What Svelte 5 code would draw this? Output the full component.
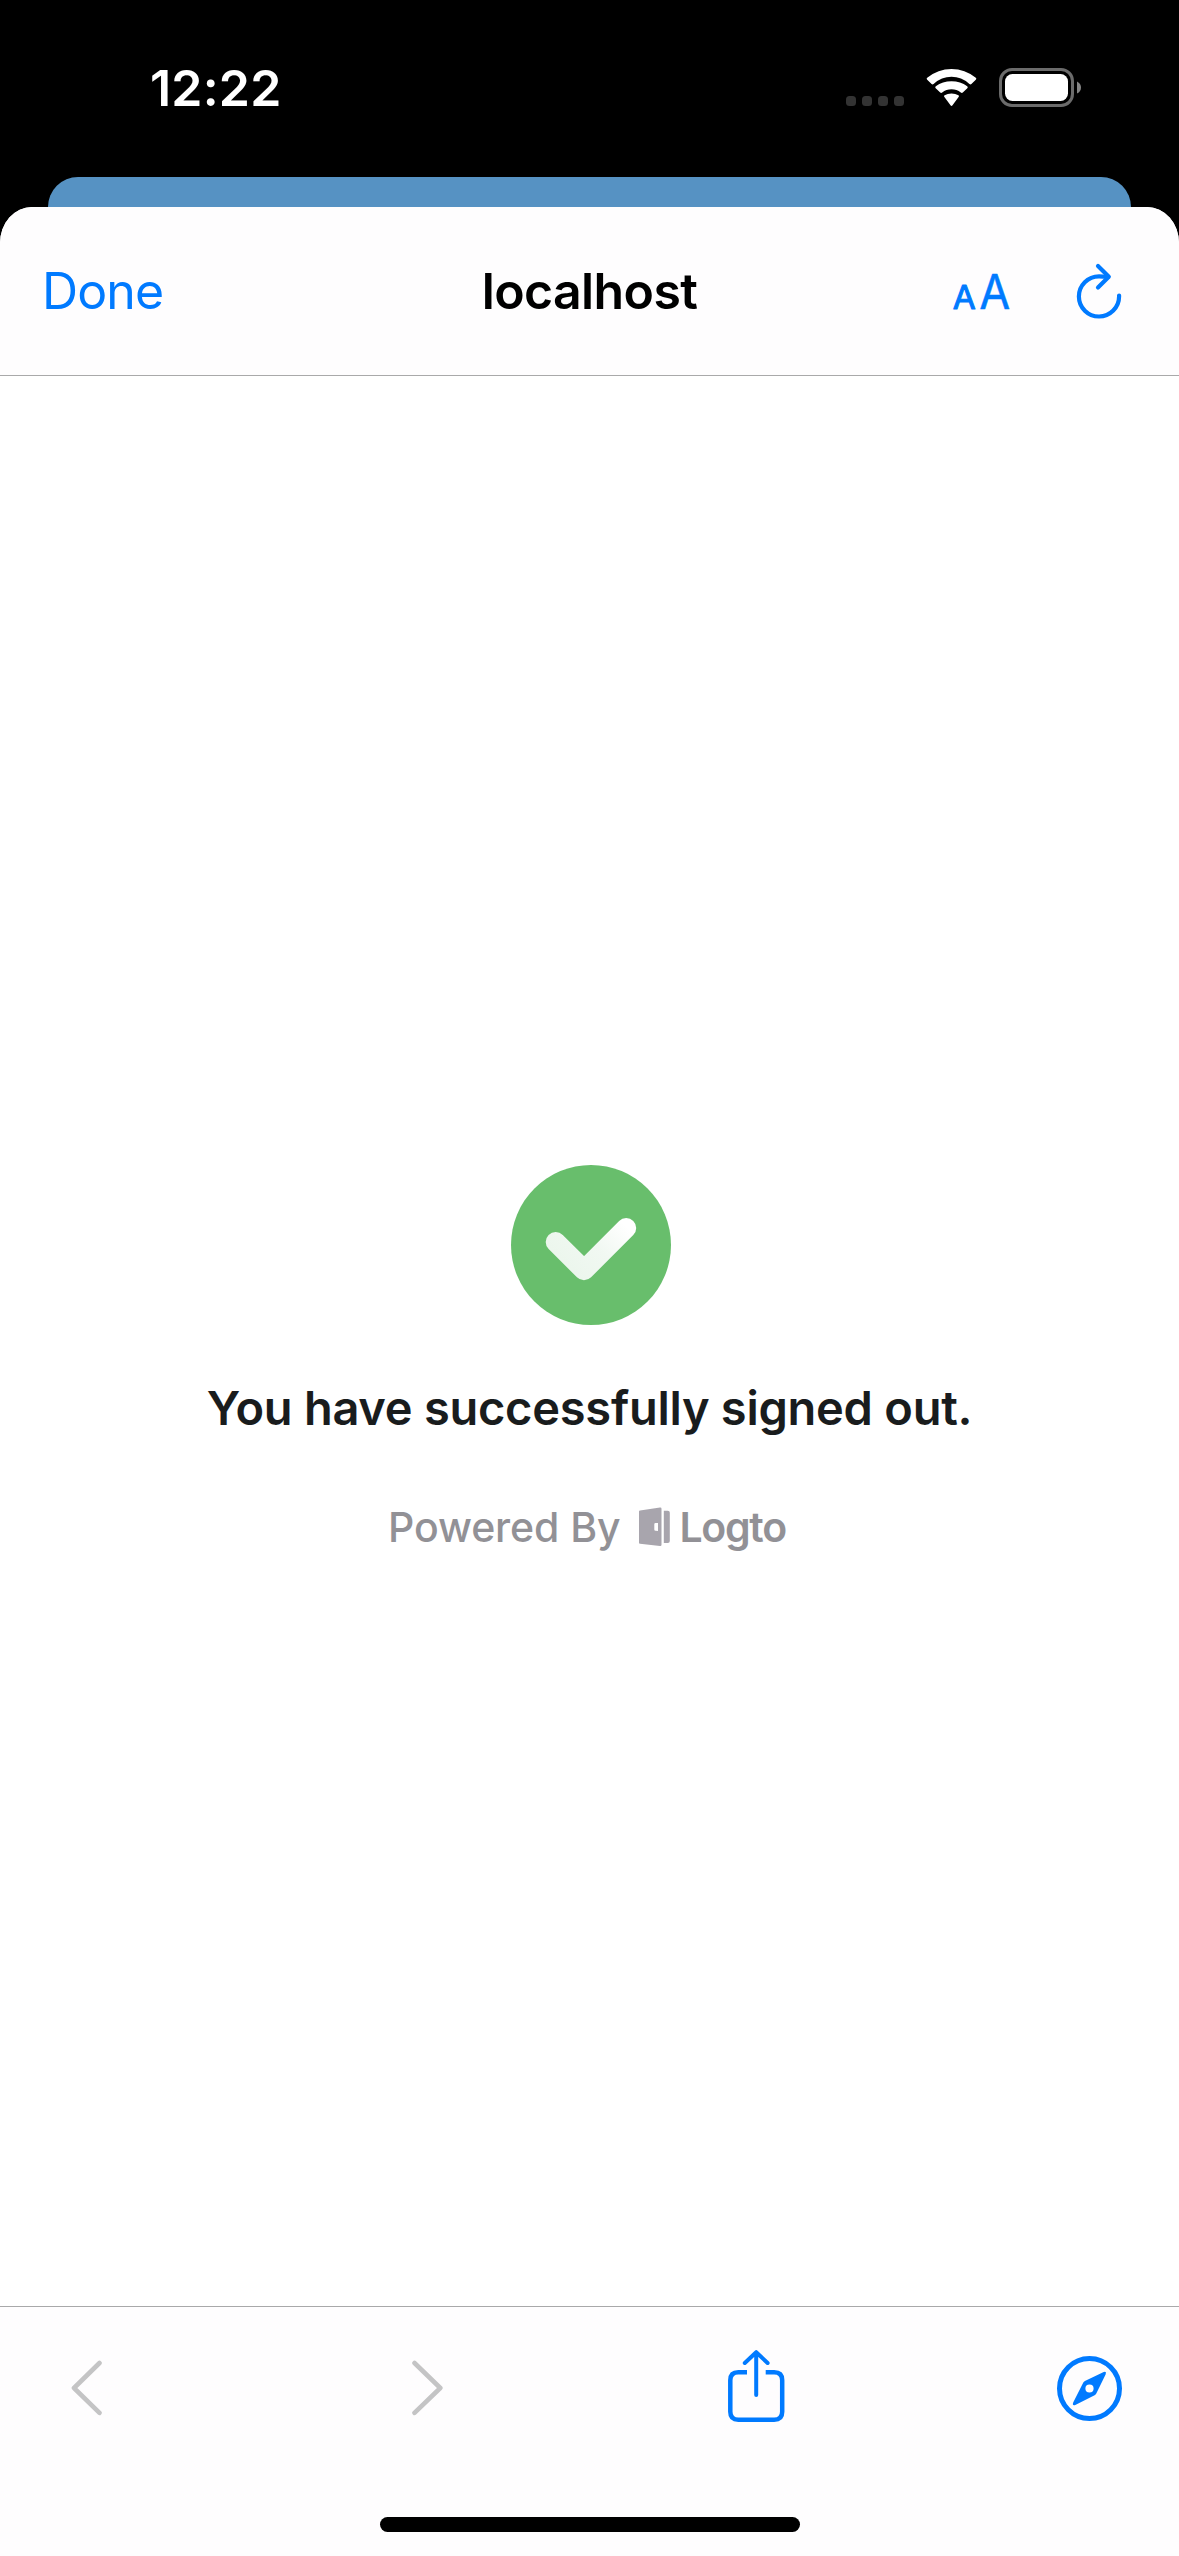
<script>
  const signalDots = [0, 1, 2, 3];
</script>

<div class="screen">
  <div class="status">
    <span class="time">12:22</span>
    <div class="indicators">
      <div class="dots">
        {#each signalDots as dot (dot)}
          <i></i>
        {/each}
      </div>
      <svg class="wifi" viewBox="926 68 51 39" width="51" height="39" fill="#fff">
        <path d="M927.2 79.8Q926 78.800 927.200 77.800Q938 69 951.500 69T975.800 77.800Q977 78.800 975.800 79.800L971.400 84Q970.500 84.800 969.400 83.900Q961.500 76.800 951.500 76.800T933.600 83.900Q932.500 84.800 931.600 84Z" />
        <path d="M935.700 88.200Q934.600 87.200 935.800 86.200Q942.500 81.300 951.500 81.300T967.200 86.200Q968.400 87.200 967.300 88.200L962.800 92.500Q961.900 93.300 960.800 92.500Q956.800 89.300 951.500 89.300T942.200 92.500Q941.100 93.300 940.200 92.500Z" />
        <path d="M944.400 97Q943.400 96 944.600 95.200Q947.500 93.500 951.500 93.500T958.400 95.200Q959.600 96 958.600 97L952.500 105.200Q951.500 106.600 950.500 105.200Z" />
      </svg>
      <svg class="battery" viewBox="999 68 83 39" width="83" height="39">
        <rect x="1000.500" y="69.500" width="72" height="36" rx="11.500" fill="none" stroke="#6b6b6b" stroke-width="3" />
        <rect x="1005" y="74" width="63" height="27" rx="7.500" fill="#fff" />
        <path d="M1077 81.500Q1081 83.500 1081 87.500T1077 93.500Z" fill="#858585" />
      </svg>
    </div>
  </div>
  <div class="backdrop"></div>
  <div class="sheet-wrap">
    <div class="sheet">
      <header>
        <span class="done">Done</span>
        <span class="host">localhost</span>
        <div class="actions">
          <svg class="aa" viewBox="953 270 58 44" width="58" height="44">
            <text x="952.800" y="308.800" font-size="33" textLength="23" lengthAdjust="spacingAndGlyphs">A</text>
            <text x="979.300" y="308.800" font-size="48" textLength="31" lengthAdjust="spacingAndGlyphs" class="big">A</text>
          </svg>
          <svg class="line" viewBox="1075 262 48 58" width="48" height="58" stroke-width="4.200">
            <path d="M1119.100 295.500V296.300A20.100 20.100 0 1 1 1099 276.300Q1103 276.300 1108 277" />
            <path d="M1098 266L1108.800 276.800L1098 287.500" />
          </svg>
        </div>
      </header>

      <main>
        <svg class="success" viewBox="511 1165 160 160" width="160" height="160">
          <defs>
            <linearGradient id="tick" gradientUnits="userSpaceOnUse" x1="560" y1="1285" x2="622" y2="1222">
              <stop offset="0" stop-color="#e9f5ea" />
              <stop offset="0.600" stop-color="#f1f8f2" />
              <stop offset="1" stop-color="#fff" />
            </linearGradient>
          </defs>
          <circle cx="591" cy="1245" r="80" fill="#68be6c" />
          <path d="M555.700 1242L584 1270.200L626.200 1228" fill="none" stroke="url(#tick)" stroke-width="20" stroke-linecap="round" stroke-linejoin="round" />
        </svg>
        <h1>You have successfully signed out.</h1>
        <div class="powered">
          <span class="by">Powered By</span>
          <svg viewBox="638 1507 31 40" width="31" height="40" fill="#a8a5ad">
            <path fill-rule="evenodd" d="M638 1511.500Q638 1510.700 639 1510.500L659 1507.500Q660.500 1507.300 660.500 1508.800V1544.700Q660.500 1546.200 659 1546L639 1543.700Q638 1543.500 638 1542.700ZM654.500 1523Q653.300 1523 653.300 1524.200V1529.500Q653.300 1530.700 654.500 1530.800L657 1531V1523Z" />
            <path d="M662.800 1510.800H666.800Q668.800 1510.800 668.800 1512.800V1541Q668.800 1543 666.800 1543H662.800Z" />
          </svg>
          <span class="brand">Logto</span>
        </div>
      </main>

      <footer>
        <nav>
          <svg class="line off" viewBox="71 2348 31 76" width="31" height="76" stroke-width="4.600">
            <path d="M99.500 2363L74 2388L99.500 2412.800" />
          </svg>
          <svg class="line off forward" viewBox="412 2348 31 76" width="31" height="76" stroke-width="4.600">
            <path d="M414.500 2363L440.300 2388L414.500 2412.800" />
          </svg>
          <svg class="line share" viewBox="728 2348 57 76" width="57" height="76" stroke-width="4.500">
            <path stroke-linecap="butt" d="M747 2372.300H738.300Q730.300 2372.300 730.300 2380.300V2411.700Q730.300 2419.700 738.300 2419.700H774.200Q782.200 2419.700 782.200 2411.700V2380.300Q782.200 2372.300 774.200 2372.300H765.700" />
            <path stroke-width="4" d="M756.200 2353V2395M744.800 2363L756.200 2352.200L767.600 2363" />
          </svg>
          <svg class="line compass" viewBox="1057 2348 65 76" width="65" height="76">
            <circle cx="1089.500" cy="2388.500" r="30" stroke-width="5" />
            <path class="needle" fill-rule="evenodd" d="M1083.300 2382.500Q1083.900 2381.500 1084.900 2381L1103.700 2372Q1106.800 2371 1105.700 2374.200L1096.300 2393.500Q1095.700 2394.700 1094.600 2395.300L1075.300 2405Q1071.900 2406 1073.200 2402.600ZM1085.400 2388.500a4.100 4.100 0 1 0 8.200 0a4.100 4.100 0 1 0 -8.200 0Z" />
          </svg>
        </nav>
        <div class="home"></div>
      </footer>
    </div>
  </div>
</div>

<style>
  :global(body) {
    margin: 0;
    background: #000;
  }
  .screen {
    width: 1179px;
    height: 2556px;
    display: flex;
    flex-direction: column;
    background: #000;
    font-family: Inter, "Liberation Sans", sans-serif;
    overflow: hidden;
  }
  svg {
    display: block;
    flex: none;
  }
  span,
  h1 {
    white-space: nowrap;
  }
  .status {
    height: 177px;
    box-sizing: border-box;
    padding: 58px 97px 0 150px;
    display: flex;
    justify-content: space-between;
    align-items: flex-start;
  }
  .time {
    color: #fff;
    font-size: 50px;
    line-height: 60px;
    font-weight: 600;
    letter-spacing: 0.2px;
  }
  .indicators {
    display: flex;
    padding-top: 10px;
  }
  .dots {
    display: flex;
    gap: 6px;
    padding-top: 28px;
    margin-right: 22px;
  }
  .dots i {
    width: 10px;
    height: 10px;
    border-radius: 3.5px;
    background: #333;
  }
  .wifi {
    margin-right: 22px;
  }
  .backdrop {
    height: 30px;
    margin: 0 48px;
    background: #5692c3;
    border-radius: 30px 30px 0 0 / 30px 30px 0 0;
  }
  .sheet-wrap {
    flex: 1;
    display: flex;
  }
  .sheet {
    flex: 1;
    display: flex;
    flex-direction: column;
    background: #fff;
    border-radius: 32px 32px 0 0 / 36px 36px 0 0;
    overflow: hidden;
  }
  header {
    height: 169px;
    box-sizing: border-box;
    border-bottom: 1px solid #a9a9aa;
    background: #fefdfe;
    display: grid;
    grid-template-columns: 1fr auto 1fr;
    padding: 0 56px;
  }
  .done,
  .host {
    padding-top: 54px;
    font-size: 50px;
    line-height: 60px;
  }
  .done {
    margin-left: -14px;
    color: #007aff;
    letter-spacing: -0.9px;
  }
  .host {
    color: #000;
    font-weight: 600;
    letter-spacing: -0.6px;
  }
  .actions {
    display: flex;
    justify-content: flex-end;
    padding-top: 55px;
  }
  .aa {
    margin: 8px 64px 0 0;
    overflow: visible;
  }
  .aa text {
    fill: #007aff;
    stroke: #007aff;
    stroke-width: 1px;
    stroke-linejoin: round;
  }
  .aa .big {
    stroke-width: 0.5px;
  }
  .line {
    fill: none;
    stroke: #007aff;
    stroke-linecap: round;
    stroke-linejoin: round;
  }
  .off {
    stroke: #c4c4c5;
  }
  main {
    flex: 1;
    display: flex;
    flex-direction: column;
    align-items: center;
    padding-top: 789px;
  }
  .success {
    margin-left: 3px;
  }
  h1 {
    margin: 53px 0 0;
    color: #191c1d;
    font-size: 47px;
    line-height: 60px;
    font-weight: 600;
    letter-spacing: -0.26px;
  }
  .powered {
    width: 403px;
    display: flex;
    margin-top: 64px;
    color: #929196;
    line-height: 50px;
  }
  .by {
    font-size: 41px;
    font-weight: 450;
    letter-spacing: -0.1px;
    margin-right: 19px;
  }
  .powered svg {
    margin-top: 5px;
  }
  .brand {
    font-size: 41px;
    font-weight: 600;
    margin-left: 9px;
    letter-spacing: -1.3px;
  }
  footer {
    height: 250px;
    box-sizing: border-box;
    border-top: 1px solid #a9a9aa;
    background: #fefdfe;
    display: flex;
    flex-direction: column;
    align-items: center;
    justify-content: space-between;
    padding: 41px 0 24px;
  }
  nav {
    align-self: stretch;
    display: flex;
    padding-left: 71px;
  }
  .forward {
    margin-left: 310px;
  }
  .share {
    margin-left: 285px;
  }
  .compass {
    margin-left: 272px;
  }
  .needle {
    fill: #007aff;
    stroke: none;
  }
  .home {
    width: 420px;
    height: 15px;
    border-radius: 8px;
    background: #000;
  }
</style>
